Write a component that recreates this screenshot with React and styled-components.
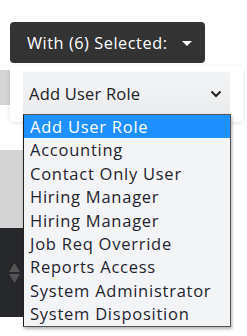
import React from 'react'
import styled, { createGlobalStyle } from 'styled-components';

const Global = createGlobalStyle`
body{
    margin:0;
    background:#fff;
    font-family:"Open Sans", "Noto Sans", sans-serif;
}
`;

const Page = styled.div`
width:247px;
height:336px;
overflow:hidden;
position:relative;
`;
const Toolbar = styled.div`
padding:22px 0 0 10px;
`;
const Anchor = styled.div`
position:relative;
display:inline-block;
`;
const Button = styled.button`
display:flex;
align-items:center;
gap:14px;
height:41px;
width:195px;
padding:0 0 0 17px;
border:0;
border-radius:4px;
background:#333;
color:#fff;
font-family:"Open Sans", sans-serif;
font-size:16.3px;
letter-spacing:0.55px;
cursor:pointer;
`;
const Caret = styled.span`
width:0;
height:0;
margin-top:2px;
border-left:5px solid transparent;
border-right:5px solid transparent;
border-top:5px solid #fff;
`;
const Band = styled.div`
width:160px;
height:${p => p.h}px;
margin-top:${p => p.mt || 0}px;
background:${p => p.bg};
display:flex;
align-items:center;
padding-left:9px;
box-sizing:border-box;
`;
const Menu = styled.div`
position:absolute;
top:calc(100% + 3px);
left:0;
width:233px;
box-sizing:border-box;
padding:6px 13px 7px;
background:#fff;
border-radius:4px;
box-shadow:0 1px 4px rgba(0,0,0,0.12);
`;
const SelectBox = styled.div`
position:relative;
height:43px;
display:flex;
align-items:center;
justify-content:space-between;
padding:0 8px 0 6px;
background:linear-gradient(#f3f4f6, #eaebed);
color:#222;
font-size:16.5px;
letter-spacing:0.2px;
`;
const List = styled.ul`
position:absolute;
top:calc(100% - 1px);
left:0;
width:208px;
box-sizing:border-box;
margin:0;
padding:0;
list-style:none;
background:#f3f4f6;
border:1px solid #555;
border-left-color:#222;
box-shadow:1px 2px 3px rgba(0,0,0,0.3);
`;
const Item = styled.li`
height:23.4px;
line-height:23.4px;
padding-left:6px;
font-size:16.5px;
letter-spacing:0.75px;
color:${p => p.active ? '#fff' : '#1f2430'};
background:${p => p.active ? '#1e90ff' : 'transparent'};
white-space:nowrap;
`;

const roles = [
    'Add User Role',
    'Accounting',
    'Contact Only User',
    'Hiring Manager',
    'Hiring Manager',
    'Job Req Override',
    'Reports Access',
    'System Administrator',
    'System Disposition',
];

const Chevron = () => (
    <svg width="12" height="8" viewBox="0 0 12 8">
        <path d="M1.5 1.5 L6 6 L10.5 1.5" fill="none" stroke="#222" strokeWidth="2" />
    </svg>
);

const SortIcon = () => (
    <svg width="11" height="20" viewBox="0 0 11 20">
        <path d="M5.5 0 L11 9 L0 9 Z" fill="#555" />
        <path d="M5.5 20 L11 11 L0 11 Z" fill="#555" />
    </svg>
);

export default function App() {
    return (
        <Page>
            <Global />
            <Toolbar>
                <Anchor>
                    <Button>
                        With (6) Selected:
                        <Caret />
                    </Button>
                    <Menu>
                        <SelectBox>
                            Add User Role
                            <Chevron />
                            <List>
                                {roles.map((r, i) => (
                                    <Item key={i} active={i === 0}>{r}</Item>
                                ))}
                            </List>
                        </SelectBox>
                    </Menu>
                </Anchor>
            </Toolbar>
            <Band h={35} mt={7} bg="#d4d4d4" />
            <Band h={78} mt={45} bg="#d4d4d4" />
            <Band h={89} bg="#25272b">
                <SortIcon />
            </Band>
        </Page>
    )
}
